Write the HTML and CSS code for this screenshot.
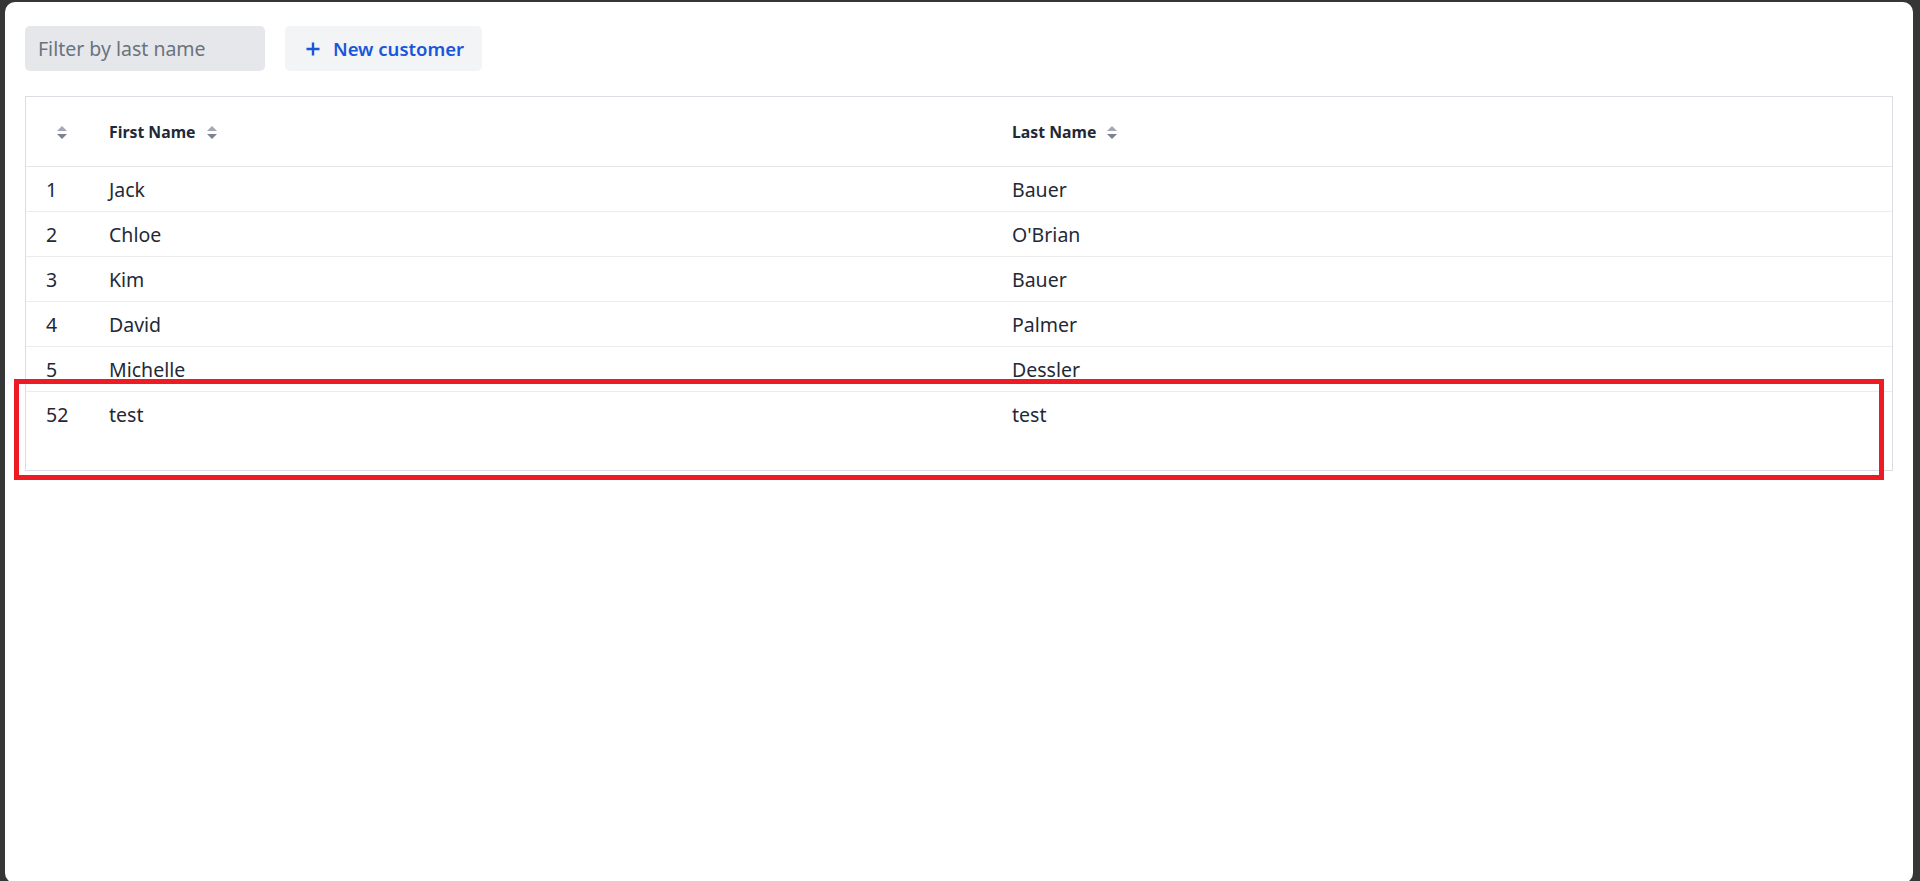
FILE: index.html
```html
<!DOCTYPE html>
<html lang="en">
<head>
    <meta charset="UTF-8">
    <title>Customers</title>
    <link rel="stylesheet" href="styles.css">
</head>
<body>
    <div class="panel">
        <div class="toolbar">
            <input class="filter-input" type="text" placeholder="Filter by last name">
            <button class="new-button">
                <svg class="plus-icon" viewBox="0 0 16 16" width="16" height="16">
                    <path d="M8 1.5v13M1.5 8h13" stroke="currentColor" stroke-width="2.4" fill="none"/>
                </svg>
                <span>New customer</span>
            </button>
        </div>

        <div class="grid-wrap">
            <table class="grid">
                <colgroup>
                    <col class="col-id">
                    <col class="col-first">
                    <col>
                </colgroup>
                <thead>
                    <tr>
                        <th><span class="sort"></span></th>
                        <th>First Name<span class="sort"></span></th>
                        <th>Last Name<span class="sort"></span></th>
                    </tr>
                </thead>
                <tbody>
                    <tr><td>1</td><td>Jack</td><td>Bauer</td></tr>
                    <tr><td>2</td><td>Chloe</td><td>O'Brian</td></tr>
                    <tr><td>3</td><td>Kim</td><td>Bauer</td></tr>
                    <tr><td>4</td><td>David</td><td>Palmer</td></tr>
                    <tr><td>5</td><td>Michelle</td><td>Dessler</td></tr>
                    <tr><td>52</td><td>test</td><td>test</td></tr>
                </tbody>
            </table>
        </div>

        <div class="highlight"></div>
    </div>
</body>
</html>
```

FILE: styles.css
```css
html, body {
    margin: 0;
    padding: 0;
    height: 100%;
}

body {
    background-color: #363636;
    font-family: "Noto Sans", "Open Sans", sans-serif;
    color: #1f2937;
    overflow: hidden;
}

.panel {
    position: relative;
    box-sizing: border-box;
    margin: 2px 7px 0 5px;
    height: 881px;
    padding: 24px 20px 0 20px;
    background-color: #fff;
    border-radius: 10px;
}

.toolbar {
    display: flex;
    align-items: center;
    gap: 20px;
}

.filter-input {
    box-sizing: border-box;
    width: 240px;
    height: 45px;
    padding: 0 13px;
    border: none;
    border-radius: 5px;
    background-color: #e5e7eb;
    font-family: inherit;
    font-size: 19.5px;
    color: #1f2937;
    outline: none;
}

.filter-input::placeholder {
    color: #6b7280;
}

.new-button {
    display: flex;
    align-items: center;
    gap: 12px;
    box-sizing: border-box;
    height: 45px;
    padding: 0 18px 0 20px;
    border: none;
    border-radius: 5px;
    background-color: #f3f4f6;
    color: #1a56db;
    font-family: inherit;
    font-size: 18.5px;
    font-weight: 600;
    white-space: nowrap;
    cursor: pointer;
}

.plus-icon {
    flex-shrink: 0;
}

.grid-wrap {
    margin-top: 25px;
    border: 1px solid #dcdde3;
    padding-bottom: 34px;
}

.grid {
    width: 100%;
    border-collapse: collapse;
    table-layout: fixed;
}

.col-id {
    width: 67px;
}

.col-first {
    width: 903px;
}

.grid th {
    height: 69px;
    padding: 0 16px;
    text-align: left;
    font-size: 15.8px;
    font-weight: 700;
    color: #1f2937;
    border-bottom: 1px solid #e5e7eb;
}

.grid th:first-child,
.grid td:first-child {
    padding-left: 20px;
}

.grid td {
    height: 44px;
    padding: 0 16px;
    font-size: 19.5px;
    color: #1f2937;
    border-bottom: 1px solid #ececf0;
}

.grid tbody tr:last-child td {
    border-bottom: none;
}

.sort {
    display: inline-block;
    position: relative;
    width: 10px;
    height: 13px;
    margin-left: 11px;
    vertical-align: -1px;
}

.sort::before,
.sort::after {
    content: "";
    position: absolute;
    left: 0;
    border-left: 5px solid transparent;
    border-right: 5px solid transparent;
}

.sort::before {
    top: 0;
    border-bottom: 5.5px solid #a3a8b3;
}

.sort::after {
    bottom: 0;
    border-top: 5.5px solid #7d8290;
}

.highlight {
    position: absolute;
    left: 9px;
    top: 377px;
    width: 1860px;
    height: 91px;
    border: 5px solid #ed1c24;
}
```
